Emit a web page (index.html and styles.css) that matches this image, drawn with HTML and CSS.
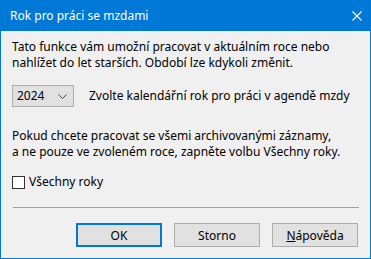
FILE: index.html
```html
<!DOCTYPE html>
<html lang="cs">
<head>
  <meta charset="UTF-8" />
  <title>Rok pro práci se mzdami</title>
  <link rel="stylesheet" href="styles.css">
</head>
<body>
  <div class="window">
    <div class="titlebar">
      <span class="title">Rok pro práci se mzdami</span>
      <svg class="close" width="10" height="10" viewBox="0 0 10 10">
        <path d="M0.5 0.5 L9.5 9.5 M9.5 0.5 L0.5 9.5" stroke="#fff" stroke-width="1.1" fill="none"/>
      </svg>
    </div>

    <div class="content">
      <p class="text">Tato funkce vám umožní pracovat v aktuálním roce nebo<br>nahlížet do let starších. Období lze kdykoli změnit.</p>

      <div class="year-row">
        <div class="combo">
          <span>2024</span>
          <svg width="9" height="5" viewBox="0 0 9 5">
            <path d="M0.5 0.5 L4.5 4.5 L8.5 0.5" stroke="#444" stroke-width="1" fill="none"/>
          </svg>
        </div>
        <span>Zvolte kalendářní rok pro práci v agendě mzdy</span>
      </div>

      <p class="text">Pokud chcete pracovat se všemi archivovanými záznamy,<br>a ne pouze ve zvoleném roce, zapněte volbu Všechny roky.</p>

      <label class="check">
        <span class="box"></span>
        <span>Všechny roky</span>
      </label>

      <div class="separator"></div>

      <div class="buttons">
        <button class="btn default">OK</button>
        <button class="btn">Storno</button>
        <button class="btn"><u>N</u>ápověda</button>
      </div>
    </div>
  </div>
</body>
</html>
```

FILE: styles.css
```css
* { box-sizing: border-box; margin: 0; padding: 0; }

body {
  font-family: "Segoe UI", "Noto Sans", sans-serif;
  font-size: 12px;
  color: #000;
  background: #fff;
}

.window {
  width: 371px;
  height: 259px;
  border: 1px solid #0078d7;
  border-top: none;
  background: #f0f0f0;
  display: flex;
  flex-direction: column;
}

.titlebar {
  height: 31px;
  margin: 0 -1px;
  background: #0078d7;
  color: #fff;
  display: flex;
  align-items: center;
  justify-content: space-between;
  padding: 0 9px 0 10px;
}

.title { font-size: 12px; }

.content {
  padding: 8px 11px 0 11px;
  line-height: 16px;
}

.text { margin-bottom: 14px; }

.year-row {
  display: flex;
  align-items: center;
  gap: 15px;
  margin-bottom: 21px;
}

.combo {
  width: 62px;
  height: 22px;
  border: 1px solid #adadad;
  background: #e1e1e1;
  display: flex;
  align-items: center;
  justify-content: space-between;
  padding: 0 6px 0 4px;
}

.check {
  display: flex;
  align-items: center;
  gap: 4px;
  margin-top: 2px;
}

.box {
  width: 13px;
  height: 13px;
  border: 1px solid #333;
  background: #fff;
}

.separator {
  height: 1px;
  background: #a0a0a0;
  margin: 17px 0 15px 1px;
}

.buttons {
  display: flex;
  justify-content: flex-end;
  gap: 12px;
  padding-right: 1px;
}

.btn {
  width: 86px;
  height: 24px;
  border: 1px solid #adadad;
  background: #e1e1e1;
  font-family: inherit;
  font-size: 12px;
  color: #000;
}

.btn.default {
  border: 2px solid #0078d7;
}
```
